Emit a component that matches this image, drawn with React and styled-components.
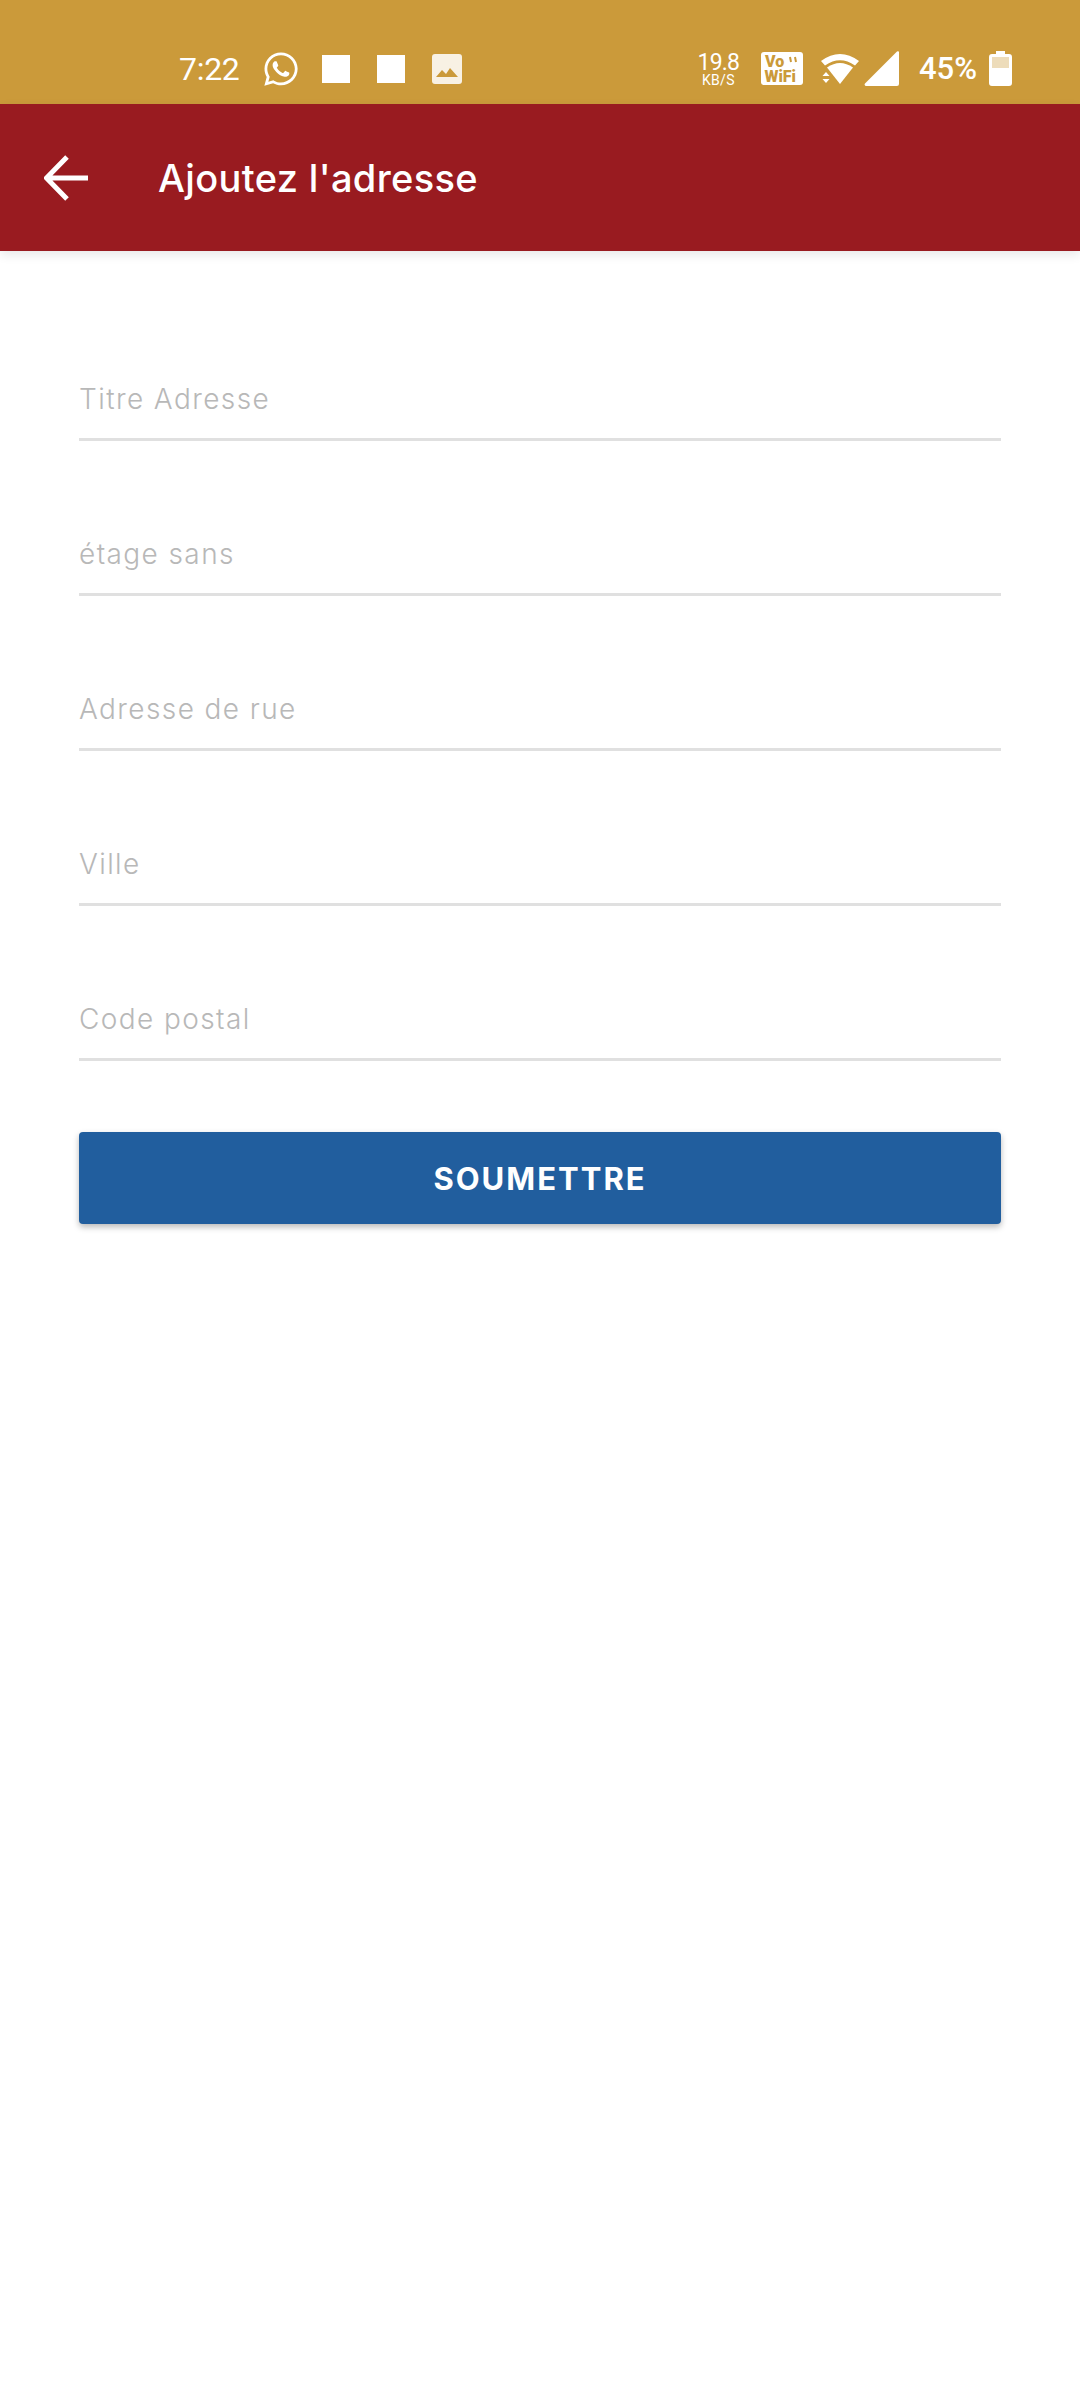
import React from "react";
import styled, { createGlobalStyle } from "styled-components";
import { FaWhatsapp } from "react-icons/fa";

const Global = createGlobalStyle`
  html, body { margin: 0; padding: 0; background: #fff; }
  * { box-sizing: border-box; }
`;

const Page = styled.div`
  width: 1080px;
  height: 2400px;
  background: #fff;
  font-family: Inter, "Liberation Sans", sans-serif;
  overflow: hidden;
`;

const StatusBar = styled.div`
  height: 104px;
  background: #cb9a3a;
  color: #fff;
  display: flex;
  align-items: center;
  justify-content: space-between;
  padding: 33px 68px 0 179px;
  font-family: Roboto, sans-serif;
`;

const StatusGroup = styled.div`
  display: flex;
  align-items: center;
`;

const Time = styled.span`
  font-size: 32px;
  line-height: 36px;
  width: 83px;
  letter-spacing: -0.3px;
`;

const Whatsapp = styled(FaWhatsapp)`
  width: 38px;
  height: 38px;
  margin-right: 22px;
`;

const Square = styled.span`
  width: 28px;
  height: 28px;
  background: #fff;
  margin-right: 27px;
`;

const Speed = styled.div`
  display: flex;
  flex-direction: column;
  align-items: center;
  margin-right: 22px;
  width: 41px;
`;

const SpeedValue = styled.span`
  font-size: 23px;
  line-height: 23px;
  letter-spacing: -0.8px;
`;

const SpeedUnit = styled.span`
  font-size: 14px;
  line-height: 13px;
  letter-spacing: 0.3px;
`;

const IconSvg = styled.svg`
  display: block;
  margin-right: ${(p) => p.$gap || 0}px;
`;

const Battery = styled.span`
  font-size: 31px;
  line-height: 36px;
  font-weight: 500;
  margin-right: 12px;
`;

const AppBar = styled.header`
  height: 147px;
  background: #991b20;
  color: #fff;
  display: flex;
  align-items: center;
  padding: 0 0 0 44px;
  box-shadow: 0 4px 10px rgba(0, 0, 0, 0.09);
  position: relative;
`;

const Title = styled.h1`
  margin: 0 0 0 70px;
  font-size: 38px;
  font-weight: 500;
  line-height: 44px;
  letter-spacing: 0.35px;
  color: #fff;
`;

const Form = styled.form`
  padding: 0 79px;
  display: flex;
  flex-direction: column;
`;

const Field = styled.div`
  height: 155px;
  display: flex;
  align-items: flex-end;
  &:first-child { height: 190px; }
`;

const FieldInner = styled.div`
  width: 100%;
  height: 59px;
  border-bottom: 3px solid #e0e0e0;
  color: #b8b8b8;
  font-size: 28px;
  font-weight: 300;
  line-height: 34px;
  letter-spacing: 1.4px;
`;

const Submit = styled.button`
  margin-top: 71px;
  height: 92px;
  width: 100%;
  border: 0;
  border-radius: 4px;
  background: #215e9e;
  color: #fff;
  font-family: Inter, sans-serif;
  font-weight: 700;
  font-size: 31px;
  letter-spacing: 2px;
  box-shadow: 0 3px 6px rgba(0, 0, 0, 0.28);
`;

const fields = ["Titre Adresse", "étage sans", "Adresse de rue", "Ville", "Code postal"];

export default function App() {
  return (
    <Page>
      <Global />
      <StatusBar>
        <StatusGroup>
          <Time>7:22</Time>
          <Whatsapp />
          <Square />
          <Square />
          <IconSvg width="30" height="30" viewBox="0 0 30 30">
            <rect width="30" height="30" rx="3" fill="#f8f1e4" />
            <path d="M4 23l6-7 4 4 4-6 8 9z" fill="#cb9a3a" />
          </IconSvg>
        </StatusGroup>
        <StatusGroup>
          <Speed>
            <SpeedValue>19.8</SpeedValue>
            <SpeedUnit>KB/S</SpeedUnit>
          </Speed>
          <IconSvg width="42" height="33" viewBox="0 0 42 33" $gap={17}>
            <rect width="42" height="33" rx="3" fill="#fff" />
            <text x="4" y="15" fontFamily="Roboto, sans-serif" fontWeight="900" fontSize="16" fill="#cb9a3a">Vo</text>
            <path d="M29 5l1 5M34 5l1 5" stroke="#cb9a3a" strokeWidth="2" />
            <text x="3.500" y="30" fontFamily="Roboto, sans-serif" fontWeight="900" fontSize="16" fill="#cb9a3a">WiFi</text>
          </IconSvg>
          <IconSvg width="40" height="33" viewBox="0 0 40 33" $gap={4}>
            <path d="M1 9Q20 -5 39 9L35 13.500Q20 3 5 13.500Z" fill="#fff" />
            <path d="M7 15.500Q20 6.500 33 15.500L20 32Z" fill="#fff" />
            <path d="M2.500 24l3.500-4 3.500 4zM2.500 27l3.500 4 3.500-4z" fill="#fff" />
          </IconSvg>
          <IconSvg width="36" height="35" viewBox="0 0 36 35" $gap={19}>
            <path d="M35 1V33a2 2 0 0 1-2 2H2a1.500 1.500 0 0 1-1-2.500L33 0.500A1.200 1.200 0 0 1 35 1Z" fill="#fff" />
          </IconSvg>
          <Battery>45%</Battery>
          <IconSvg width="23" height="35" viewBox="0 0 23 35">
            <path d="M7 0h9v3h4a3 3 0 0 1 3 3v26a3 3 0 0 1-3 3H3a3 3 0 0 1-3-3V6a3 3 0 0 1 3-3h4z" fill="#fff" />
            <rect x="3" y="6" width="17" height="11" fill="#cb9a3a" opacity="0.35" />
          </IconSvg>
        </StatusGroup>
      </StatusBar>
      <AppBar>
        <svg width="44" height="46" viewBox="0 0 44 46">
          <path d="M44 23H3M23 2L2.500 23L23 44" fill="none" stroke="#fff" strokeWidth="5" />
        </svg>
        <Title>Ajoutez l'adresse</Title>
      </AppBar>
      <Form>
        {fields.map((f) => (
          <Field key={f}>
            <FieldInner>{f}</FieldInner>
          </Field>
        ))}
        <Submit type="button">SOUMETTRE</Submit>
      </Form>
    </Page>
  );
}
